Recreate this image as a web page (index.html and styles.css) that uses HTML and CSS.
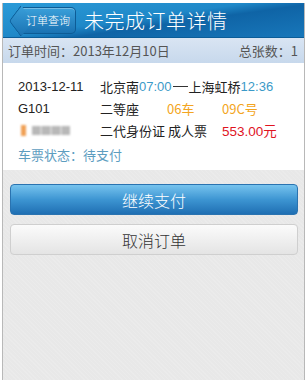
FILE: index.html
```html
<!DOCTYPE html>
<html lang="zh-CN">
<head>
  <meta charset="UTF-8">
  <meta name="viewport" content="width=device-width, initial-scale=1.0">
  <title>未完成订单详情</title>
  <link rel="stylesheet" href="styles.css">
</head>
<body>
  <div class="frame">
    <header class="topbar">
      <a href="#" class="back-btn">订单查询</a>
      <h1>未完成订单详情</h1>
    </header>

    <div class="order-info">
      <span>订单时间：2013年12月10日</span>
      <span>总张数：1</span>
    </div>

    <!-- Ticket card -->
    <div class="ticket">
      <div class="row">
        <span class="col-a">2013-12-11</span>
        <span class="col-b route">北京南<em class="time">07:00</em><i class="dash"></i>上海虹桥<em class="time">12:36</em></span>
      </div>
      <div class="row">
        <span class="col-a">G101</span>
        <span class="col-b">二等座</span>
        <span class="col-c orange">06车</span>
        <span class="col-d orange">09C号</span>
      </div>
      <div class="row">
        <span class="col-a name"><i class="mark"></i><i class="blur"></i></span>
        <span class="col-b wide">二代身份证 成人票</span>
        <span class="col-d red">553.00元</span>
      </div>
      <div class="status">车票状态：待支付</div>
    </div>

    <div class="actions">
      <button class="btn btn-pay">继续支付</button>
      <button class="btn btn-cancel">取消订单</button>
    </div>
  </div>
</body>
</html>
```

FILE: styles.css
```css
* {
  margin: 0;
  padding: 0;
  box-sizing: border-box;
  font-family: "Noto Sans CJK SC", "Liberation Sans", sans-serif;
}

body {
  background-color: #fff;
  width: 307px;
  height: 382px;
  padding: 3px 2px 2px 2px;
}

.frame {
  width: 303px;
  height: 377px;
  border-left: 1px solid #b8b8b8;
  border-right: 1px solid #b8b8b8;
  background-color: #e8e8e8;
  background-image: repeating-linear-gradient(45deg, rgba(255, 255, 255, 0.12) 0 1px, transparent 1px 3px);
  display: flex;
  flex-direction: column;
}

/* Header */
.topbar {
  height: 35px;
  display: flex;
  align-items: center;
  padding-left: 9px;
  gap: 8px;
  background: linear-gradient(172deg, #2b9bd8 0%, #1f88c8 45%, #0f64a6 58%, #1877ba 100%);
  border-bottom: 1px solid #0b5d98;
}

.back-btn {
  position: relative;
  z-index: 1;
  display: flex;
  align-items: center;
  height: 27px;
  padding: 0 5px 0 6px;
  margin-left: 8px;
  color: #fff;
  font-size: 11px;
  font-weight: 300;
  text-decoration: none;
  background: linear-gradient(#3aa0da, #1a72b2);
  border: 1px solid #0d5c96;
  border-left: none;
  border-radius: 0 5px 5px 0;
  box-shadow: inset 0 1px 0 rgba(255, 255, 255, 0.3);
}

.back-btn::before {
  content: "";
  position: absolute;
  left: -9px;
  top: 3px;
  width: 19px;
  height: 19px;
  background: linear-gradient(135deg, #3aa0da, #1a72b2);
  border-left: 1px solid #0d5c96;
  border-bottom: 1px solid #0d5c96;
  transform: rotate(45deg) skew(8deg, 8deg);
  border-radius: 0 0 0 3px;
  z-index: -1;
}

.topbar h1 {
  color: #fff;
  font-size: 20px;
  font-weight: 300;
  letter-spacing: 0.5px;
}

/* Order info bar */
.order-info {
  height: 25px;
  display: flex;
  justify-content: space-between;
  align-items: center;
  padding: 0 6px 0 5px;
  background: linear-gradient(#d9e5f3, #c7d8ec);
  color: #555;
  font-size: 13px;
}

/* Ticket */
.ticket {
  background-color: #fff;
  padding: 12px 0 4px 15px;
  font-size: 13px;
  color: #222;
}

.row {
  display: flex;
  height: 22px;
  align-items: center;
}

.col-a {
  width: 82px;
  font-family: "Liberation Sans", "Noto Sans CJK SC", sans-serif;
}

.col-b {
  width: 67px;
}

.col-b.wide {
  width: 122px;
}

.col-b.route {
  width: auto;
  display: flex;
  align-items: center;
}

.col-c {
  width: 55px;
}

.time {
  font-style: normal;
  color: #3b9ac8;
  font-family: "Liberation Sans", sans-serif;
  font-size: 13px;
}

.dash {
  display: inline-block;
  width: 15px;
  height: 1px;
  margin: 1px 1px 0 1px;
  background-color: #333;
}

.orange {
  color: #f3a521;
}

.red {
  color: #e0141f;
  font-family: "Liberation Sans", "Noto Sans CJK SC", sans-serif;
  font-size: 13.5px;
}

.name {
  display: flex;
  align-items: center;
  gap: 6px;
}

.mark {
  display: inline-block;
  width: 5px;
  height: 11px;
  margin-left: 3px;
  background-color: #f0a055;
  filter: blur(1px);
}

.blur {
  display: inline-block;
  width: 38px;
  height: 9px;
  background: repeating-linear-gradient(90deg, #b8b8b8 0 8px, #d4d4d4 8px 10px);
  filter: blur(1.2px);
}

.status {
  color: #5d9dbf;
  font-size: 13px;
  height: 24px;
  display: flex;
  align-items: center;
  margin-top: 1px;
}

/* Buttons */
.actions {
  display: flex;
  flex-direction: column;
  gap: 9px;
  padding: 14px 6px 0 7px;
}

.btn {
  height: 31px;
  border-radius: 4px;
  font-size: 16px;
  font-weight: 300;
  cursor: pointer;
}

.btn-pay {
  color: #fff;
  background: linear-gradient(#76c3ee, #3d95d2 50%, #1f6fb3);
  border: 1px solid #2a73b0;
}

.btn-cancel {
  color: #333;
  background: linear-gradient(#fbfbfb, #e4e4e4);
  border: 1px solid #cfcfcf;
}
```
